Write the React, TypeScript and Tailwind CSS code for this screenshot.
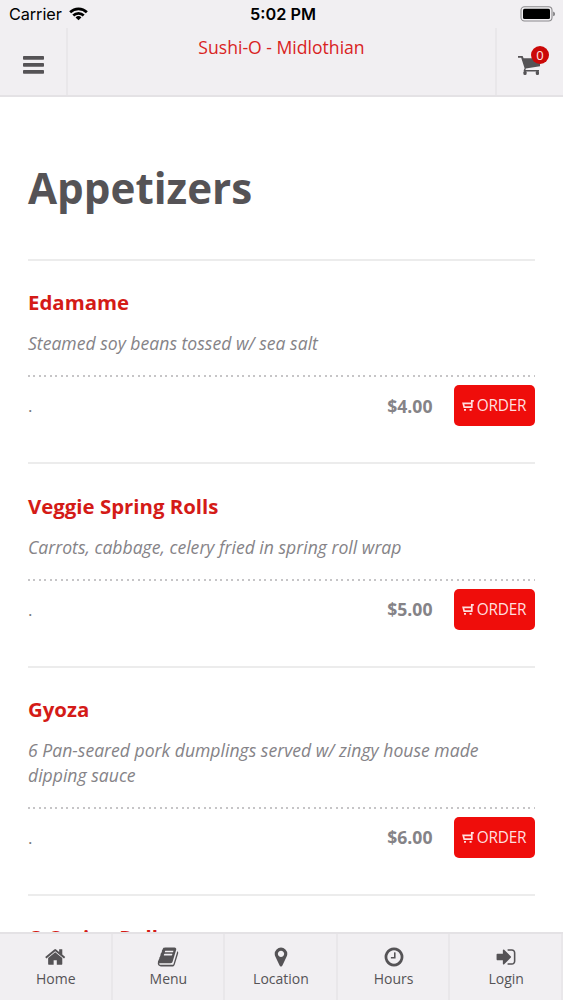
import React from 'react';

interface MenuItem {
    name: string;
    description?: string;
    price?: string;
}

const items: MenuItem[] = [
    { name: 'Edamame', description: 'Steamed soy beans tossed w/ sea salt', price: '$4.00' },
    { name: 'Veggie Spring Rolls', description: 'Carrots, cabbage, celery fried in spring roll wrap', price: '$5.00' },
    { name: 'Gyoza', description: '6 Pan-seared pork dumplings served w/ zingy house made dipping sauce', price: '$6.00' },
    { name: 'O Spring Rolls' },
];

const tabs = [
    {
        label: 'Home',
        path: 'M1408 992v480q0 26-19 45t-45 19h-384v-384h-256v384h-384q-26 0-45-19t-19-45v-480q0-1 .5-3t.5-3l575-474 575 474q1 2 1 6zm223-69l-62 74q-8 9-21 11h-3q-13 0-21-7l-692-577-692 577q-12 8-24 7-13-2-21-11l-62-74q-8-10-7-23.5t11-21.5l719-599q32-26 76-26t76 26l244 204v-195q0-14 9-23t23-9h192q14 0 23 9t9 23v408l219 182q10 8 11 21.5t-7 23.5z',
    },
    {
        label: 'Menu',
        path: 'M1703 478q40 57 18 129l-275 906q-19 64-76.5 107.5t-122.5 43.5h-923q-77 0-148.5-53.5t-99.5-131.5q-24-67-2-127 0-4 3-27t4-37q1-8-3-21.5t-3-19.5q2-11 8-21t16.5-23.5 16.5-23.5q23-38 45-91.5t30-91.5q3-10 .5-30t-.5-28q3-11 17-28t17-23q21-36 42-92t25-90q1-9-2.5-32t.5-28q4-13 22-30.5t22-22.5q19-26 42.5-84.5t27.5-96.5q1-8-3-25.5t-2-26.5q2-8 9-18t18-23 17-21q8-12 16.5-30.5t15-35 16-36 19.5-32 26.5-23.5 36-11.5 47.5 5.5l-1 3q38-9 51-9h761q74 0 114 56t18 130l-274 906q-36 119-71.5 153.5t-128.5 34.5h-869q-27 0-38 15-11 16-1 43 24 70 144 70h923q29 0 56-15.5t35-41.5l300-987q7-22 5-57 38 15 59 43zm-1064 2q-4 13 2 22.5t20 9.5h608q13 0 25.5-9.5t16.5-22.5l21-64q4-13-2-22.5t-20-9.5h-608q-13 0-25.5 9.5t-16.5 22.5zm-83 256q-4 13 2 22.5t20 9.5h608q13 0 25.5-9.5t16.5-22.5l21-64q4-13-2-22.5t-20-9.5h-608q-13 0-25.5 9.5t-16.5 22.5z',
    },
    {
        label: 'Location',
        path: 'M1152 640q0-106-75-181t-181-75-181 75-75 181 75 181 181 75 181-75 75-181zm256 0q0 109-33 179l-364 774q-16 33-47.5 52t-67.5 19-67.5-19-46.5-52l-365-774q-33-70-33-179 0-212 150-362t362-150 362 150 150 362z',
    },
    {
        label: 'Hours',
        path: 'M1024 544v448q0 14-9 23t-23 9h-320q-14 0-23-9t-9-23v-64q0-14 9-23t23-9h224v-352q0-14 9-23t23-9h64q14 0 23 9t9 23zm416 352q0-148-73-273t-198-198-273-73-273 73-198 198-73 273 73 273 198 198 273 73 273-73 198-198 73-273zm224 0q0 209-103 385.5t-279.5 279.5-385.5 103-385.5-103-279.5-279.5-103-385.5 103-385.5 279.5-279.5 385.5-103 385.5 103 279.5 279.5 103 385.5z',
    },
    {
        label: 'Login',
        path: 'M1312 896q0 26-19 45l-544 544q-19 19-45 19t-45-19-19-45v-288h-448q-26 0-45-19t-19-45v-384q0-26 19-45t45-19h448v-288q0-26 19-45t45-19 45 19l544 544q19 19 19 45zm352-352v704q0 119-84.5 203.5t-203.5 84.5h-320q-13 0-22.5-9.5t-9.5-22.5q0-4-1-20t-.5-26.5 3-23.5 10-19.5 20.5-6.5h320q66 0 113-47t47-113v-704q0-66-47-113t-113-47h-312l-11.5-1-11.5-3-8-5.5-7-9-2-13.5q0-4-1-20t-.5-26.5 3-23.5 10-19.5 20.5-6.5h320q119 0 203.5 84.5t84.5 203.5z',
    },
];

const StatusBar: React.FC = () => (
    <div className="grid h-7 grid-cols-[1fr_auto_1fr] items-center pr-2 pl-[9px] font-['Inter',sans-serif] text-[16.3px] leading-7 text-black">
        <div className="flex items-center gap-[7px]">
            <span className="tracking-[-0.1px]">Carrier</span>
            <svg width="19" height="14" viewBox="0 0 20 14" fill="none" stroke="currentColor" strokeWidth="2.8">
                <path d="M1.2 5.2a12.4 12.4 0 0 1 17.6 0" />
                <path d="M4.5 8.6a7.8 7.8 0 0 1 11 0" />
                <path d="M10 13.7 6.9 10.7a4.4 4.4 0 0 1 6.2 0z" fill="currentColor" stroke="none" />
            </svg>
        </div>
        <span className="pl-0.5 text-center font-semibold">5:02 PM</span>
        <svg className="justify-self-end" width="36" height="16" viewBox="0 0 36 16">
            <rect x="2" y="0.8" width="31" height="14.2" rx="3.5" fill="none" stroke="#8b8a8d" strokeWidth="1.1" />
            <rect x="4" y="2.8" width="27" height="10.2" rx="1.5" fill="#000" />
            <path d="M34.2 5.5q1.8.7 1.8 2.4t-1.8 2.4z" fill="#77767a" />
        </svg>
    </div>
);

const Header: React.FC = () => (
    <header className="h-[97px] shrink-0 border-b-2 border-[#e4e2e5] bg-[#f1eff2]">
        <StatusBar />
        <div className="flex h-[67px]">
            <button className="flex w-[68px] items-center justify-center border-r-2 border-[#e9e7ea] pt-1.5">
                <svg width="21" height="18" viewBox="0 0 21 18" fill="#555356">
                    <rect width="21" height="3.8" rx="0.8" />
                    <rect y="7" width="21" height="3.8" rx="0.8" />
                    <rect y="14" width="21" height="3.8" rx="0.8" />
                </svg>
            </button>
            <h1 className="flex-1 pt-[7px] text-center text-[17.6px] leading-6 text-[#d9231f]">Sushi-O - Midlothian</h1>
            <button className="flex w-[68px] items-center justify-center border-l-2 border-[#e9e7ea] pt-2">
                <span className="relative -left-px">
                    <svg width="22" height="20" viewBox="0 0 22 20" fill="#555356">
                        <path d="M0 0h4.6l1 2.2H22v8.1L7.8 12.4l-.4 1.5H21v1.7H6.2l-.6-1.2 1-2.2L3.2 1.7H0z" />
                        <rect x="5.4" y="15" width="3.2" height="4" rx="1.3" />
                        <rect x="17.8" y="15" width="3.2" height="4" rx="1.3" />
                    </svg>
                    <span className="absolute -top-[10px] left-[13px] flex h-[18px] w-[18px] items-center justify-center rounded-full bg-[#cb0808] pt-px text-[13px] leading-none text-[#ffe5e5]">
                        0
                    </span>
                </span>
            </button>
        </div>
    </header>
);

const MenuRow: React.FC<{ item: MenuItem }> = ({ item }) => (
    <section className="border-t-2 border-[#ececec] pt-[27.4px] pb-[35.75px]">
        <h3 className="text-[20.4px] leading-7 font-bold text-[#d41b17]">{item.name}</h3>
        {item.description && (
            <>
                <p className="mt-[15.2px] text-[17.6px] leading-[24.6px] text-[#858387] italic">{item.description}</p>
                <div className="mt-[19.6px] h-0.5 bg-[repeating-linear-gradient(90deg,#c6c5c7_0px,#c6c5c7_1.7px,transparent_1.7px,transparent_5.5px)]" />
                <div className="mt-2 flex h-[41px] items-center">
                    <span className="flex-1 text-[17px] text-[#77757a]">.</span>
                    <span className="mr-[21.5px] text-[17.6px] font-bold text-[#858387]">{item.price}</span>
                    <button className="flex h-[41px] w-[81px] items-center justify-center gap-[3px] rounded-[5px] bg-[#ef0d0b] pr-px text-[15.4px] tracking-[-0.2px] text-[#ffdede]">
                        <svg width="12" height="11" viewBox="0 0 12 11" fill="none" stroke="currentColor" strokeWidth="1.7">
                            <path d="M11.8 .9H9.8V7.2H2.2L1.2 3.4H9.8" />
                            <path d="M2 9.9h2M7.6 9.9h2" />
                        </svg>
                        ORDER
                    </button>
                </div>
            </>
        )}
    </section>
);

const TabBar: React.FC = () => (
    <nav className="grid h-[68px] shrink-0 grid-cols-5 border-t-2 border-[#e4e2e5] bg-[#f1eff2]">
        {tabs.map((tab) => (
            <button
                key={tab.label}
                className="flex flex-col items-center border-r-2 border-[#e9e7ea] pt-3 pl-px text-[14px] leading-[21px] text-[#555356]"
            >
                <svg width="22" height="22" viewBox="0 0 1792 1792" fill="currentColor">
                    <path d={tab.path} />
                </svg>
                {tab.label}
            </button>
        ))}
    </nav>
);

export default function App() {
    return (
        <div className="flex h-[1000px] w-[563px] flex-col overflow-hidden bg-white font-['Open_Sans',sans-serif]">
            <Header />
            <main className="min-h-0 flex-1 overflow-hidden px-7">
                <h2 className="pt-[61px] pb-[40.6px] text-[42.2px] leading-[60px] font-bold text-[#555356]">Appetizers</h2>
                {items.map((item) => (
                    <MenuRow key={item.name} item={item} />
                ))}
            </main>
            <TabBar />
        </div>
    );
}
